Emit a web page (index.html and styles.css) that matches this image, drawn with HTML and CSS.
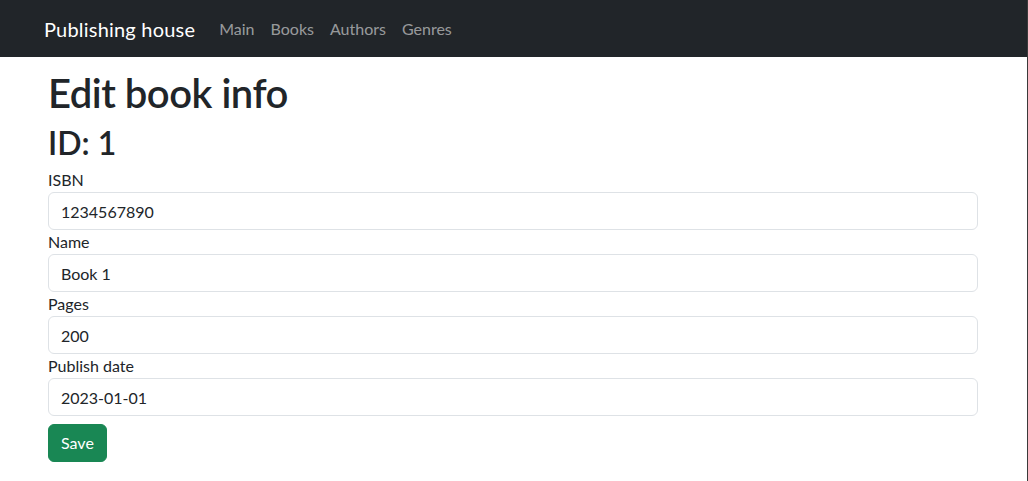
FILE: index.html
```html
<!DOCTYPE html>
<html lang="en">
<head>
<meta charset="utf-8">
<title>Edit book info</title>
<link rel="stylesheet" href="styles.css">
</head>
<body>
<div class="frame">
  <nav class="navbar">
    <div class="nav-inner">
      <a class="brand" href="#">Publishing house</a>
      <ul class="nav-links">
        <li><a href="#">Main</a></li>
        <li><a href="#">Books</a></li>
        <li><a href="#">Authors</a></li>
        <li><a href="#">Genres</a></li>
      </ul>
    </div>
  </nav>
  <main class="container">
    <h1 class="title">Edit book info</h1>
    <h2 class="subtitle">ID: 1</h2>
    <form class="form">
      <div class="field">
        <label class="label">ISBN</label>
        <input class="input" type="text" value="1234567890">
      </div>
      <div class="field">
        <label class="label">Name</label>
        <input class="input" type="text" value="Book 1">
      </div>
      <div class="field">
        <label class="label">Pages</label>
        <input class="input" type="text" value="200">
      </div>
      <div class="field">
        <label class="label">Publish date</label>
        <input class="input" type="text" value="2023-01-01">
      </div>
      <button class="btn-save" type="button">Save</button>
    </form>
  </main>
</div>
</body>
</html>
```
FILE: styles.css
```css
* { box-sizing: border-box; }
html, body { margin: 0; padding: 0; }
body {
  font-family: Lato, "Noto Sans", sans-serif;
  font-size: 16px;
  line-height: 1.5;
  color: #212529;
  background: #fff;
}
.frame {
  min-height: 481px;
  border-right: 1px solid #3a3a3a;
}
.navbar {
  background: #212529;
  height: 57px;
  display: flex;
  align-items: center;
}
.nav-inner {
  display: flex;
  align-items: center;
  padding-left: 44px;
}
.brand {
  color: #fff;
  text-decoration: none;
  font-size: 20px;
  line-height: 30px;
  letter-spacing: 0.2px;
  margin-right: 16px;
}
.nav-links {
  display: flex;
  list-style: none;
  margin: 0;
  padding: 0;
}
.nav-links a {
  display: block;
  padding: 8px;
  color: rgba(255,255,255,0.55);
  text-decoration: none;
}
.container {
  width: 930px;
  margin-left: 48px;
  padding-top: 9px;
}
.title {
  font-size: 40px;
  font-weight: 600;
  line-height: 1.2;
  letter-spacing: -0.5px;
  margin: 0 0 7px;
  padding-top: 3px;
}
.subtitle {
  font-size: 32px;
  font-weight: 600;
  line-height: 1.2;
  margin: 0 0 6px;
}
.form { display: flex; flex-direction: column; }
.field { display: flex; flex-direction: column; }
.label { line-height: 24px; }
.input {
  font: inherit;
  color: #212529;
  height: 38px;
  padding: 6px 12px;
  border: 1px solid #dee2e6;
  border-radius: 6px;
  width: 100%;
  background: #fff;
}
.btn-save {
  align-self: flex-start;
  margin-top: 8px;
  font: inherit;
  color: #fff;
  background: #198754;
  border: 1px solid #198754;
  border-radius: 6px;
  padding: 6px 12px;
  height: 38px;
  line-height: 24px;
}
```
